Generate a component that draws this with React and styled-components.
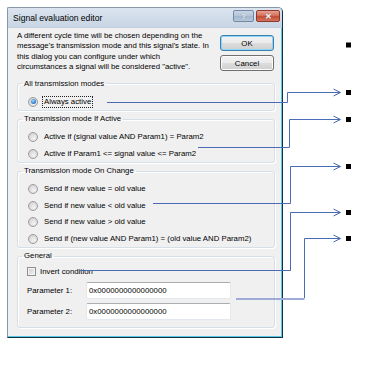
import React from 'react';
import styled, { createGlobalStyle } from 'styled-components';

const GlobalStyle = createGlobalStyle`
  html, body {
    margin: 0;
    padding: 0;
    background: #ffffff;
  }
  body {
    font-family: "Liberation Sans", Arial, sans-serif;
    font-size: 7.8px;
    color: #000;
  }
`;

const Page = styled.div`
  position: relative;
  width: 366px;
  height: 365px;
  padding: 7px 0 0 7px;
  box-sizing: border-box;
  overflow: hidden;
`;

const Window = styled.div`
  width: 276px;
  height: 331px;
  box-sizing: border-box;
  display: flex;
  flex-direction: column;
  background: #f0f0f0;
  border-left: 1px solid #8996a4;
  border-top: 1px solid #8996a4;
  border-right: 1px solid #12343f;
  border-bottom: 1px solid #12343f;
  border-radius: 2px 5px 0 0;
  box-shadow: inset -1px -1px 0 #58c6e6;
  overflow: hidden;
`;

const TitleBar = styled.div`
  height: 19px;
  flex: none;
  display: flex;
  align-items: center;
  justify-content: space-between;
  padding: 0 2px 0 5px;
  background: linear-gradient(#dbe4ef, #c8d5e4);
  border-bottom: 1px solid #c3cfdc;
`;

const Title = styled.span`
  font-size: 8.6px;
  color: #000;
`;

const CaptionButtons = styled.div`
  display: flex;
  gap: 2px;
  align-self: flex-start;
  margin-top: 2px;
`;

const CaptionButton = styled.div`
  width: ${p => (p.$close ? '24px' : '21px')};
  height: 12px;
  box-sizing: border-box;
  border: 1px solid ${p => (p.$close ? '#8d3a2a' : '#7189a6')};
  border-radius: 2px;
  background: ${p =>
    p.$close
      ? 'linear-gradient(#e7a394, #d26a55 50%, #c24a33 51%, #d5735d)'
      : 'linear-gradient(#c9d6e5, #b3c4d8 50%, #a2b6ce 51%, #b6c7db)'};
  display: flex;
  align-items: center;
  justify-content: center;
  color: #fff;
  font-size: 8px;
  font-weight: bold;
  text-shadow: 0 0 1px #4f5f72;
`;

const Client = styled.div`
  flex: 1;
  display: flex;
  flex-direction: column;
  padding: 3px 7px 0 9px;
`;

const Intro = styled.div`
  display: flex;
  justify-content: space-between;
  margin-bottom: 6px;
`;

const Description = styled.p`
  margin: 0;
  line-height: 10.4px;
  white-space: nowrap;
`;

const ButtonColumn = styled.div`
  display: flex;
  flex-direction: column;
  gap: 4px;
  padding-top: 4px;
  margin-right: 1px;
`;

const PushButton = styled.button`
  width: 54px;
  height: 16px;
  box-sizing: border-box;
  padding: 0;
  font-family: inherit;
  font-size: 7.8px;
  color: #000;
  border-radius: 3px;
  border: 1px solid ${p => (p.$default ? '#3c7fb1' : '#707070')};
  box-shadow: ${p => (p.$default ? 'inset 0 0 0 1px #8fd6f5' : 'inset 0 0 0 1px #fbfbfb')};
  background: linear-gradient(#f2f2f2, #ebebeb 50%, #dddddd 51%, #cfcfcf);
`;

const Groups = styled.div`
  display: flex;
  flex-direction: column;
  gap: 3px;
`;

const Group = styled.fieldset`
  margin: 0;
  min-width: 0;
  padding: ${p => p.$pad || '5px 8px 0 9px'};
  border: 1px solid #d5dfe5;
  border-radius: 3px;
  box-shadow: inset 1px 1px 0 #ffffff, 1px 1px 0 #ffffff;
  display: flex;
  flex-direction: column;
`;

const Legend = styled.legend`
  padding: 0 2px;
  margin-left: -5px;
  line-height: 10px;
  color: #000;
`;

const OptionRow = styled.div`
  display: flex;
  align-items: center;
  gap: 5px;
  height: 16.5px;
  padding-left: 1px;
`;

const RadioMark = styled.span`
  flex: none;
  width: 10px;
  height: 10px;
  box-sizing: border-box;
  border-radius: 50%;
  border: 1px solid #9c9c9c;
  background: radial-gradient(circle at 60% 65%, #f4f4f4 0%, #dcdcdc 55%, #c9c9c9 100%);
  display: flex;
  align-items: center;
  justify-content: center;
  &::after {
    content: '';
    width: 5px;
    height: 5px;
    border-radius: 50%;
    background: ${p =>
      p.$checked ? 'radial-gradient(circle at 40% 35%, #9ad8ff, #2a73c8 70%, #1b5aa8)' : 'transparent'};
  }
`;

const OptionText = styled.span`
  padding: 0 1px;
  line-height: 10px;
  outline: ${p => (p.$focused ? '1px dotted #222' : 'none')};
`;

const CheckRow = styled.div`
  display: flex;
  align-items: center;
  gap: 4px;
  height: 14px;
`;

const CheckMark = styled.span`
  flex: none;
  width: 9px;
  height: 9px;
  box-sizing: border-box;
  border: 1px solid #8f8f8f;
  background: linear-gradient(135deg, #cfcfcf, #f2f2f2);
  box-shadow: inset 0 0 0 1px #f4f4f4;
`;

const ParamRow = styled.div`
  display: flex;
  align-items: center;
  margin-top: 4px;
`;

const ParamLabel = styled.span`
  width: 59px;
  flex: none;
`;

const HexField = styled.input`
  width: 145px;
  height: 17px;
  box-sizing: border-box;
  margin: 0;
  padding: 0 2px;
  font-family: inherit;
  font-size: 7.8px;
  color: #000;
  background: #fff;
  border: 1px solid #e2e8ee;
  border-top-color: #abadb3;
  border-radius: 2px;
  outline: none;
`;

const Callouts = styled.svg`
  position: absolute;
  left: 0;
  top: 0;
  pointer-events: none;
`;

const LINE = '#4a6bb5';
const bullets = [45, 92.5, 119.5, 166.5, 212.5, 238.5];
const leaders = [
  'M107 102.5 H287.5 V92.5 H340',
  'M198 147.5 H289.5 V119.5 H340',
  'M153 203.5 H290.5 V166.5 H340',
  'M80 270.5 H290.5 V212.5 H340',
  'M304.5 298 V238.5 H340',
];

const Option = ({ label, checked, focused }) => (
  <OptionRow>
    <RadioMark $checked={checked} />
    <OptionText $focused={focused}>{label}</OptionText>
  </OptionRow>
);

const App = () => (
  <>
    <GlobalStyle />
    <Page>
      <Window>
        <TitleBar>
          <Title>Signal evaluation editor</Title>
          <CaptionButtons>
            <CaptionButton>?</CaptionButton>
            <CaptionButton $close>✕</CaptionButton>
          </CaptionButtons>
        </TitleBar>
        <Client>
          <Intro>
            <Description>
              A different cycle time will be chosen depending on the
              <br />
              message's transmission mode and this signal's state. In
              <br />
              this dialog you can configure under which
              <br />
              circumstances a signal will be considered "active".
            </Description>
            <ButtonColumn>
              <PushButton $default>OK</PushButton>
              <PushButton>Cancel</PushButton>
            </ButtonColumn>
          </Intro>
          <Groups>
            <Group>
              <Legend>All transmission modes</Legend>
              <Option label="Always active" checked focused />
            </Group>
            <Group>
              <Legend>Transmission mode If Active</Legend>
              <Option label="Active if (signal value AND Param1) = Param2" />
              <Option label="Active if Param1 <= signal value <= Param2" />
            </Group>
            <Group>
              <Legend>Transmission mode On Change</Legend>
              <Option label="Send if new value = old value" />
              <Option label="Send if new value < old value" />
              <Option label="Send if new value > old value" />
              <Option label="Send if (new value AND Param1) = (old value AND Param2)" />
            </Group>
            <Group $pad="3px 8px 7px 9px">
              <Legend>General</Legend>
              <CheckRow>
                <CheckMark />
                <span>Invert condition</span>
              </CheckRow>
              <ParamRow>
                <ParamLabel>Parameter 1:</ParamLabel>
                <HexField readOnly defaultValue="0x0000000000000000" />
              </ParamRow>
              <ParamRow>
                <ParamLabel>Parameter 2:</ParamLabel>
                <HexField readOnly defaultValue="0x0000000000000000" />
              </ParamRow>
            </Group>
          </Groups>
        </Client>
      </Window>
      <Callouts width="366" height="365" viewBox="0 0 366 365">
        <path d="M236 299 H304.5" stroke="#9fabd6" strokeWidth="2" fill="none" />
        {leaders.map(d => (
          <path key={d} d={d} stroke={LINE} strokeWidth="1" fill="none" />
        ))}
        {bullets.slice(1).map(y => (
          <polyline
            key={y}
            points={`333.5,${y - 3.5} 340.5,${y} 333.5,${y + 3.5}`}
            stroke={LINE}
            strokeWidth="1"
            fill="none"
          />
        ))}
        {bullets.map(y => (
          <rect key={y} x="346" y={y - 2.5} width="5" height="5" fill="#000" />
        ))}
      </Callouts>
    </Page>
  </>
);

export default App;
